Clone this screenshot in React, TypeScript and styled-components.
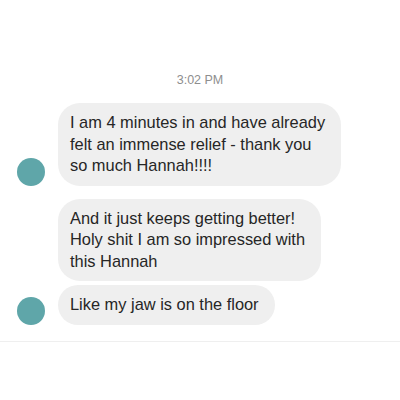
import React from 'react';
import styled, { createGlobalStyle } from 'styled-components';

const GlobalStyle = createGlobalStyle`
  html, body {
    margin: 0;
    padding: 0;
    background: #ffffff;
  }
  body {
    font-family: "Liberation Sans", Arial, sans-serif;
    -webkit-font-smoothing: antialiased;
  }
`;

const Thread = styled.div`
  width: 400px;
  height: 400px;
  display: flex;
  flex-direction: column;
  padding-top: 72px;
  box-sizing: border-box;
`;

const Timestamp = styled.div`
  text-align: center;
  font-size: 12.5px;
  line-height: 16px;
  color: #8e8e8e;
  margin-bottom: 15px;
`;

const Group = styled.div<{ $gap?: number }>`
  display: flex;
  flex-direction: column;
  gap: 4px;
  margin-bottom: ${(p) => p.$gap ?? 0}px;
`;

const Row = styled.div`
  display: flex;
  align-items: flex-end;
  padding-left: 17px;
  gap: 13px;
`;

const Avatar = styled.div<{ $hidden?: boolean }>`
  flex: 0 0 28px;
  width: 28px;
  height: 28px;
  border-radius: 50%;
  background: #5fa6a9;
  visibility: ${(p) => (p.$hidden ? 'hidden' : 'visible')};
`;

const Bubble = styled.div`
  background: #efefef;
  color: #262626;
  border-radius: 22px;
  padding: 9px 16px 9px 12px;
  font-size: 16.4px;
  line-height: 21.5px;
  white-space: nowrap;
`;

const Divider = styled.div`
  margin-top: 16px;
  height: 1px;
  background: #efefef;
`;

type Msg = { lines: string[] };

const groups: Msg[][] = [
  [{ lines: ['I am 4 minutes in and have already', 'felt an immense relief - thank you', 'so much Hannah!!!!'] }],
  [
    { lines: ['And it just keeps getting better!', 'Holy shit I am so impressed with', 'this Hannah'] },
    { lines: ['Like my jaw is on the floor'] },
  ],
];

export default function App() {
  return (
    <>
      <GlobalStyle />
      <Thread>
        <Timestamp>3:02 PM</Timestamp>
        {groups.map((msgs, gi) => (
          <Group key={gi} $gap={gi === 0 ? 13 : 0}>
            {msgs.map((m, mi) => (
              <Row key={mi}>
                <Avatar $hidden={mi !== msgs.length - 1} />
                <Bubble>
                  {m.lines.map((l, li) => (
                    <React.Fragment key={li}>
                      {li > 0 && <br />}
                      {l}
                    </React.Fragment>
                  ))}
                </Bubble>
              </Row>
            ))}
          </Group>
        ))}
        <Divider />
      </Thread>
    </>
  );
}
